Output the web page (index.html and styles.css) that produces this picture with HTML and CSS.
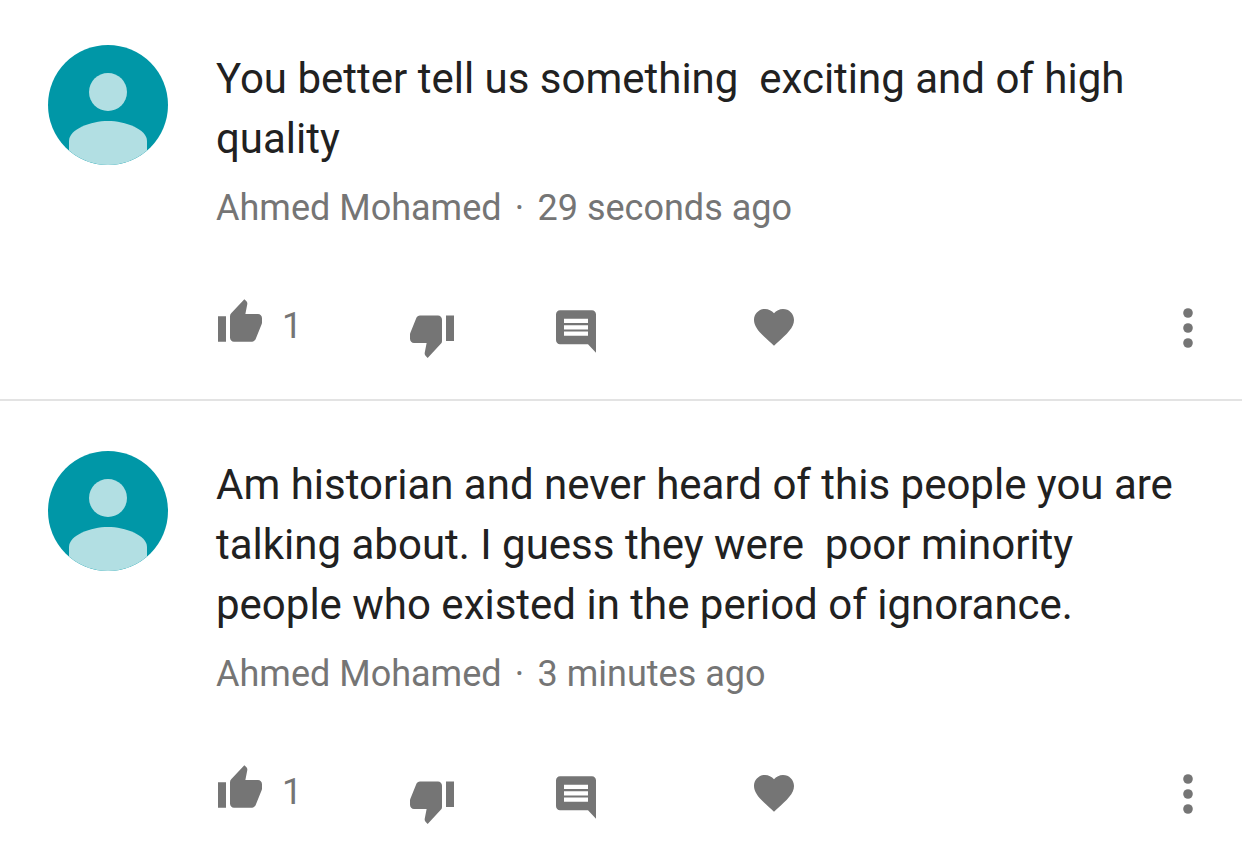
FILE: index.html
```html
<!DOCTYPE html>
<html lang="en">
<head>
<meta charset="utf-8">
<meta name="viewport" content="width=device-width, initial-scale=1">
<title>Comments</title>
<link rel="stylesheet" href="styles.css">
</head>
<body>
<svg class="sprite" aria-hidden="true">
  <symbol id="avatar" viewBox="0 0 120 120">
    <circle cx="60" cy="60" r="60" fill="#0097a7"/>
    <circle cx="60" cy="47" r="19" fill="#b2dfe3"/>
    <path d="M21 105.600V96C21 84 43 76 60 76s39 8 39 20v9.600a60 60 0 0 1-78 0z" fill="#b2dfe3"/>
  </symbol>
  <symbol id="like" viewBox="0 0 24 25.500"><path transform="scale(1 1.0625)" d="M1 21h4V9H1v12zm22-11c0-1.100-.9-2-2-2h-6.310l.95-4.570.03-.32c0-.41-.17-.79-.44-1.060L14.170 1 7.590 7.590C7.220 7.950 7 8.450 7 9v10c0 1.100.9 2 2 2h9c.83 0 1.540-.5 1.840-1.220l3.020-7.050c.09-.23.14-.47.14-.73v-2z"/></symbol>
  <symbol id="reply" viewBox="0 0 24 25.500"><path transform="scale(1 1.0625)" d="M22 4c0-1.100-.9-2-2-2H4c-1.100 0-2 .9-2 2v12c0 1.100.9 2 2 2h14l4 4V4zm-4 10H6v-2h12v2zm0-3H6V9h12v2zm0-3H6V6h12v2z"/></symbol>
  <symbol id="heart" viewBox="0 0 24 24"><path d="M12 21.350l-1.450-1.320C5.400 15.360 2 12.280 2 8.500 2 5.420 4.420 3 7.500 3c1.740 0 3.410.81 4.500 2.090C13.090 3.810 14.760 3 16.500 3 19.580 3 22 5.420 22 8.500c0 3.780-3.400 6.860-8.550 11.540L12 21.350z"/></symbol>
  <symbol id="more" viewBox="0 0 24 24"><circle cx="12" cy="4.500" r="2.400"/><circle cx="12" cy="12" r="2.400"/><circle cx="12" cy="19.500" r="2.400"/></symbol>
</svg>
<main>
  <article class="comment">
    <svg class="avatar" role="img" aria-label="Ahmed Mohamed"><use href="#avatar"/></svg>
    <div class="content">
      <p class="text">You better tell us something  exciting and of high quality</p>
      <p class="meta"><span>Ahmed Mohamed</span><span class="dot">·</span><span>29 seconds ago</span></p>
      <div class="actions">
        <button class="action like" aria-label="Like, 1"><svg class="icon tall"><use href="#like"/></svg><span>1</span></button>
        <button class="action dislike" aria-label="Dislike"><svg class="icon tall flipped"><use href="#like"/></svg></button>
        <button class="action reply" aria-label="Reply"><svg class="icon tall"><use href="#reply"/></svg></button>
        <button class="action heart" aria-label="Heart"><svg class="icon"><use href="#heart"/></svg></button>
        <button class="action more" aria-label="More options"><svg class="icon"><use href="#more"/></svg></button>
      </div>
    </div>
  </article>
  <article class="comment">
    <svg class="avatar" role="img" aria-label="Ahmed Mohamed"><use href="#avatar"/></svg>
    <div class="content">
      <p class="text">Am historian and never heard of this people you are talking about. I guess they were  poor minority people who existed in the period of ignorance.</p>
      <p class="meta"><span>Ahmed Mohamed</span><span class="dot">·</span><span>3 minutes ago</span></p>
      <div class="actions">
        <button class="action like" aria-label="Like, 1"><svg class="icon tall"><use href="#like"/></svg><span>1</span></button>
        <button class="action dislike" aria-label="Dislike"><svg class="icon tall flipped"><use href="#like"/></svg></button>
        <button class="action reply" aria-label="Reply"><svg class="icon tall"><use href="#reply"/></svg></button>
        <button class="action heart" aria-label="Heart"><svg class="icon"><use href="#heart"/></svg></button>
        <button class="action more" aria-label="More options"><svg class="icon"><use href="#more"/></svg></button>
      </div>
    </div>
  </article>
</main>
</body>
</html>
```

FILE: styles.css
```css
* { box-sizing: border-box; }
body { margin: 0; background: #fff; color: #212121; font-family: Roboto, sans-serif; }
.sprite { position: absolute; width: 0; height: 0; }
.comment { display: flex; gap: 48px; padding: 45px 30px 39px 48px; }
.comment + .comment { border-top: 2px solid #e3e3e3; padding-top: 50px; padding-bottom: 30px; }
.avatar { flex: none; width: 120px; height: 120px; }
.content { flex: 1; min-width: 0; padding-top: 4px; }
.text { margin: 0; padding-right: 18px; font-size: 42px; line-height: 60px; white-space: pre-wrap; }
.meta { display: flex; margin: 16px 0 0; color: #757575; font-size: 36px; line-height: 46px; }
.dot { width: 36px; text-align: center; }
.actions { display: flex; align-items: flex-start; margin-top: 66px; color: #757575; }
.action { display: flex; align-items: flex-start; gap: 18px; padding: 0; border: 0; background: none; color: inherit; font: 36px/58px Roboto, sans-serif; }
.icon { width: 48px; height: 48px; fill: currentColor; }
.icon.tall { height: 51px; }
.flipped { transform: rotate(180deg); }
.like { width: 192px; }
.dislike { width: 144px; margin-top: 12px; }
.reply { width: 198px; margin-top: 9px; }
.heart { margin-top: 6px; }
.more { margin: 7px 0 0 auto; }
```
